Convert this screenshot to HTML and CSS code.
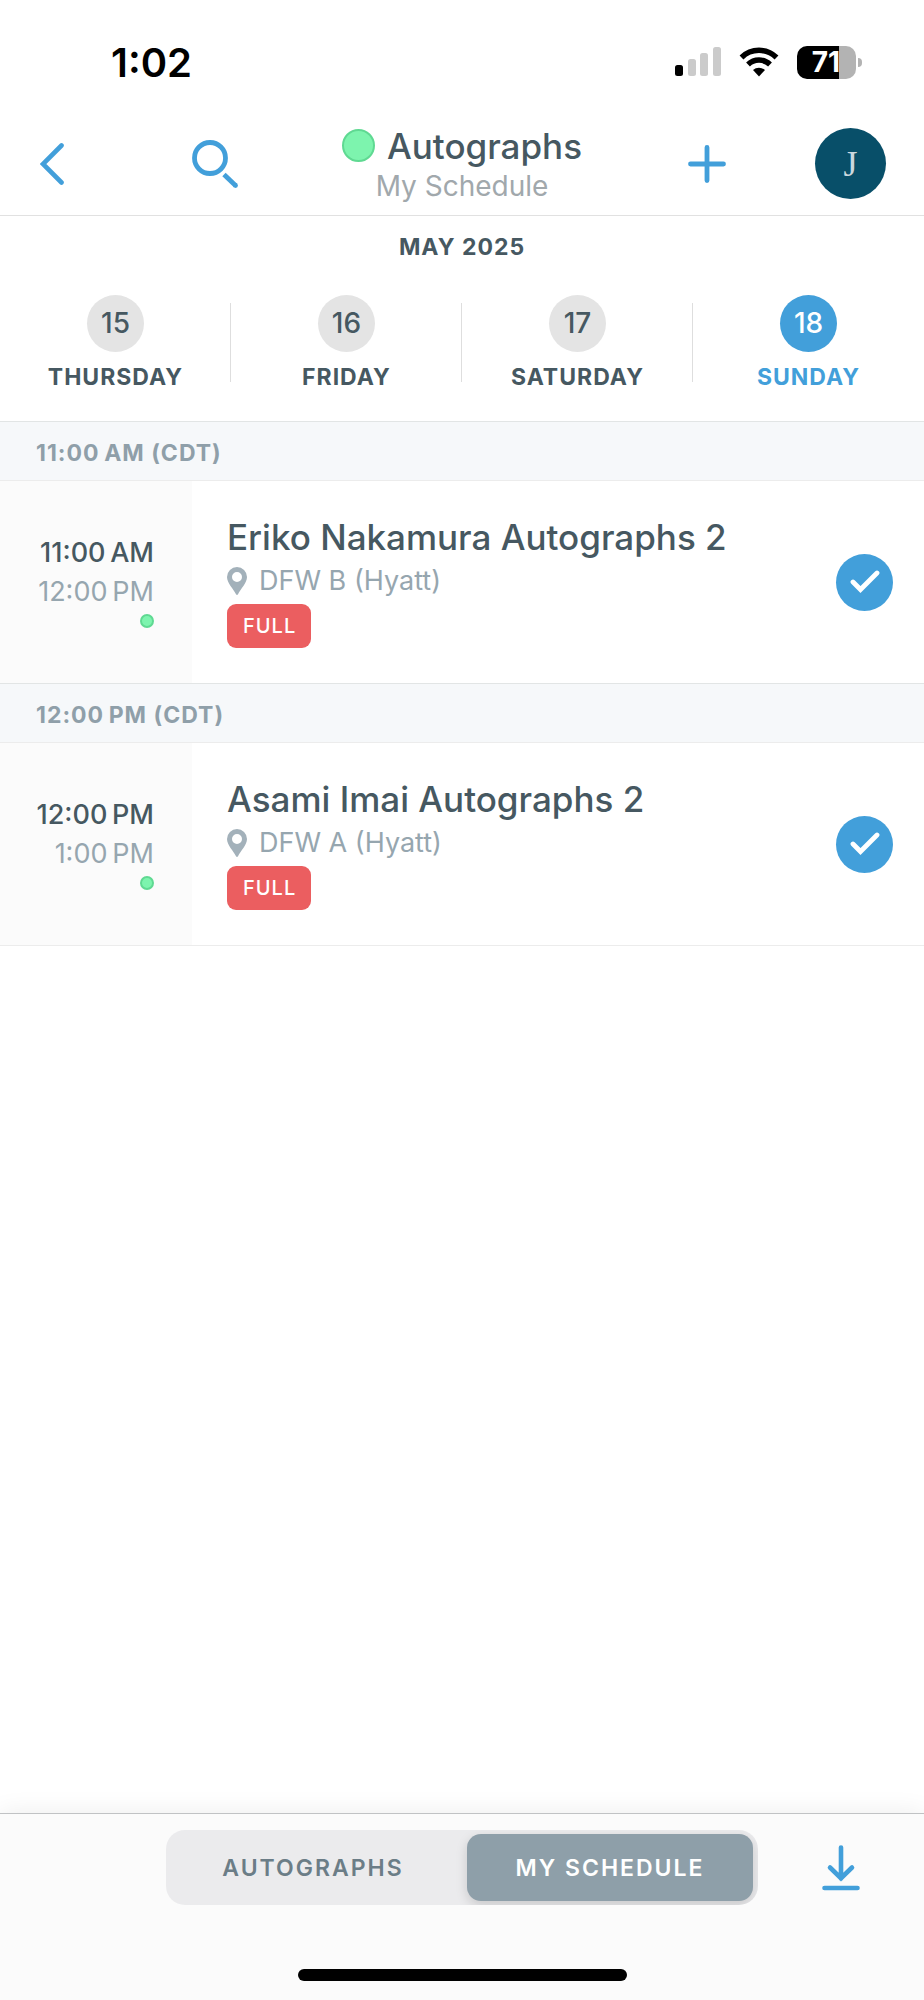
FILE: index.html
```html
<!DOCTYPE html>
<html lang="en">
<head>
<meta charset="UTF-8">
<meta name="viewport" content="width=device-width, initial-scale=1.0">
<title>Autographs - My Schedule</title>
<link rel="stylesheet" href="styles.css">
</head>
<body>

<div class="status-bar">
  <span class="clock">1:02</span>
  <div class="status-icons">
    <svg width="46" height="30" viewBox="0 0 46 30">
      <rect x="0" y="18" width="8" height="11" rx="2.5" fill="#000"/>
      <rect x="13" y="12" width="8" height="17" rx="2.5" fill="#cbcbcb"/>
      <rect x="25" y="6" width="8" height="23" rx="2.5" fill="#cbcbcb"/>
      <rect x="38" y="0" width="8" height="29" rx="2.5" fill="#cbcbcb"/>
    </svg>
    <svg width="40" height="30" viewBox="0 0 40 30">
      <path d="M2.5 10.5a25 25 0 0 1 35 0" fill="none" stroke="#000" stroke-width="5.5"/>
      <path d="M9 17.5a16 16 0 0 1 22 0" fill="none" stroke="#000" stroke-width="5.5"/>
      <path d="M20 29.5l-6-6.500a9 9 0 0 1 12 0z"/>
    </svg>
    <div class="battery"><span class="battery-level">71</span></div>
  </div>
</div>

<header class="header">
  <button class="icon-btn" aria-label="Back">
    <svg width="24" height="42" viewBox="0 0 24 42"><path d="M21.500 2.500L3 21l18.500 18.500" fill="none" stroke="#429fda" stroke-width="4.600" stroke-linecap="round"/></svg>
  </button>
  <button class="icon-btn" aria-label="Search">
    <svg width="46" height="48" viewBox="0 0 46 48"><circle cx="18" cy="18" r="15.500" fill="none" stroke="#429fda" stroke-width="4.800"/><path d="M32 34.500L43.500 45.500" stroke="#429fda" stroke-width="4.800"/><circle cx="43.500" cy="45.500" r="2.400" fill="#429fda"/></svg>
  </button>
  <div class="heading">
    <h1 class="title"><span class="title-dot"></span>Autographs</h1>
    <p class="subtitle">My Schedule</p>
  </div>
  <button class="icon-btn" aria-label="Add">
    <svg width="38" height="38" viewBox="0 0 38 38"><path d="M19 2.500v33M2.500 19h33" stroke="#429fda" stroke-width="4.800" stroke-linecap="round"/></svg>
  </button>
  <button class="avatar" aria-label="Profile">J</button>
</header>

<section class="dates">
  <h2 class="month">MAY 2025</h2>
  <div class="days">
    <button class="day"><span class="day-num">15</span><span class="day-name">THURSDAY</span></button>
    <button class="day"><span class="day-num">16</span><span class="day-name">FRIDAY</span></button>
    <button class="day"><span class="day-num">17</span><span class="day-name">SATURDAY</span></button>
    <button class="day active"><span class="day-num">18</span><span class="day-name">SUNDAY</span></button>
  </div>
</section>

<main class="schedule">
  <h3 class="slot">11:00&#8239;AM (CDT)</h3>
  <article class="event">
    <div class="times">
      <span class="start">11:00&#8239;AM</span>
      <span class="end">12:00&#8239;PM</span>
      <span class="dot"></span>
    </div>
    <div class="info">
      <h4 class="name">Eriko Nakamura Autographs 2</h4>
      <p class="place">
        <svg width="20" height="28" viewBox="0 0 20 28"><path fill="#a3b1ba" fill-rule="evenodd" d="M10 0a10 10 0 0 1 10 10c0 6-6.500 12-9 17.300q-1 1.400-2 0C6.500 22 0 16 0 10A10 10 0 0 1 10 0zm0 5a5 5 0 1 0 0 10 5 5 0 0 0 0-10z"/></svg>
        DFW B (Hyatt)
      </p>
      <span class="badge">FULL</span>
    </div>
    <button class="check" aria-label="Remove from schedule">
      <svg width="30" height="24" viewBox="0 0 30 24"><path d="M3 12l7.500 7.500L27 3" fill="none" stroke="#fff" stroke-width="4.800" stroke-linecap="round"/></svg>
    </button>
  </article>

  <h3 class="slot">12:00&#8239;PM (CDT)</h3>
  <article class="event">
    <div class="times">
      <span class="start">12:00&#8239;PM</span>
      <span class="end">1:00&#8239;PM</span>
      <span class="dot"></span>
    </div>
    <div class="info">
      <h4 class="name">Asami Imai Autographs 2</h4>
      <p class="place">
        <svg width="20" height="28" viewBox="0 0 20 28"><path fill="#a3b1ba" fill-rule="evenodd" d="M10 0a10 10 0 0 1 10 10c0 6-6.500 12-9 17.300q-1 1.400-2 0C6.500 22 0 16 0 10A10 10 0 0 1 10 0zm0 5a5 5 0 1 0 0 10 5 5 0 0 0 0-10z"/></svg>
        DFW A (Hyatt)
      </p>
      <span class="badge">FULL</span>
    </div>
    <button class="check" aria-label="Remove from schedule">
      <svg width="30" height="24" viewBox="0 0 30 24"><path d="M3 12l7.500 7.500L27 3" fill="none" stroke="#fff" stroke-width="4.800" stroke-linecap="round"/></svg>
    </button>
  </article>
</main>

<footer class="footer">
  <div class="toolbar">
    <div class="tabs">
      <button class="tab">AUTOGRAPHS</button>
      <button class="tab selected">MY SCHEDULE</button>
    </div>
    <button class="icon-btn" aria-label="Download">
      <svg width="38" height="46" viewBox="0 0 38 46" fill="none" stroke="#429fda" stroke-width="4.600" stroke-linecap="round"><path d="M19 2.500v31M8 22.500l11 10.700 11-10.700M2.500 43h33"/></svg>
    </button>
  </div>
  <div class="home-bar"></div>
</footer>

</body>
</html>
```

FILE: styles.css
```css
* {box-sizing: border-box;}

body {
    margin: 0;
    min-height: 100vh;
    display: flex;
    flex-direction: column;
    background: #fff;
    color: #465861;
    font-family: Inter, "Liberation Sans", sans-serif;
}

h1, h2, h3, h4, p {margin: 0;}

button {
    padding: 0;
    border: 0;
    background: none;
    color: inherit;
    font: inherit;
    cursor: pointer;
}

svg {display: block;}

/* phone status bar */
.status-bar {
    display: flex;
    justify-content: space-between;
    align-items: center;
    height: 112px;
    padding: 12px 68px 0 111px;
    color: #000;
}

.clock {
    font-size: 40px;
    font-weight: 600;
}

.status-icons {
    display: flex;
    align-items: center;
    gap: 18px;
}

.battery {
    position: relative;
    width: 59px;
    height: 33px;
    border-radius: 10px;
    background: linear-gradient(to right, #000 42px, #b3b3b3 42px);
}

.battery::after {
    content: "";
    position: absolute;
    left: 61px;
    top: 12px;
    width: 4px;
    height: 9px;
    border-radius: 0 4px 4px 0;
    background: #b3b3b3;
}

.battery-level {
    display: block;
    width: 43px;
    text-align: right;
    font-size: 28px;
    line-height: 33px;
    font-weight: 700;
    color: #fff;
}

/* header */
.header {
    display: grid;
    grid-template-columns: 104px 222px 1fr 217px 109px;
    align-items: center;
    height: 104px;
    border-bottom: 1px solid #e1e1e1;
}

.icon-btn {
    display: flex;
    align-items: center;
    justify-content: center;
}

.heading {
    padding-top: 2px;
    text-align: center;
    white-space: nowrap;
}

.title {
    display: flex;
    align-items: center;
    justify-content: center;
    gap: 12px;
    font-size: 35px;
    line-height: 42px;
    font-weight: 500;
}

.title-dot {
    width: 33px;
    height: 33px;
    border: 2px solid #5fd992;
    border-radius: 50%;
    background: #7df4ae;
}

.subtitle {
    font-size: 28px;
    line-height: 38px;
    color: #a1a8ac;
}

.avatar {
    width: 71px;
    height: 71px;
    border-radius: 50%;
    background: #084f69;
    color: #cbd8df;
    font-family: "Liberation Serif", serif;
    font-size: 36px;
}

/* date picker */
.dates {
    padding: 15px 0 28px;
    border-bottom: 1px solid #e2e5e5;
}

.month, .day-name {
    font-size: 23px;
    line-height: 32px;
    font-weight: 700;
    letter-spacing: 1px;
}

.month {
    margin-bottom: 32px;
    text-align: center;
}

.days {
    display: grid;
    grid-template-columns: repeat(4, 1fr);
}

.day {
    position: relative;
    display: flex;
    flex-direction: column;
    align-items: center;
    gap: 9px;
}

.day + .day::before {
    content: "";
    position: absolute;
    left: -1px;
    top: 8px;
    bottom: 11px;
    width: 1px;
    background: #dedede;
}

.day-num {
    width: 57px;
    height: 57px;
    border-radius: 50%;
    background: #e4e4e4;
    font-size: 28px;
    line-height: 57px;
    font-weight: 500;
}

.day.active {color: #429fda;}

.day.active .day-num {
    background: #429fda;
    color: #fff;
}

/* schedule list */
.schedule {flex: 1;}

.slot {
    height: 59px;
    padding-left: 36px;
    border-bottom: 1px solid #ececec;
    background: #f6f8fa;
    color: #8f9fa9;
    font-size: 23px;
    line-height: 62px;
    font-weight: 700;
    letter-spacing: 1px;
}

.event {
    display: flex;
    min-height: 203px;
    padding-right: 31px;
    border-bottom: 1px solid #e2e5e5;
}

.event:last-child {border-color: #ececec;}

.times {
    display: flex;
    flex-direction: column;
    justify-content: center;
    align-items: flex-end;
    width: 192px;
    padding: 0 38px 4px 0;
    background: #fbfbfb;
    font-size: 27px;
    line-height: 39px;
}

.start {font-weight: 500;}

.end {color: #96a6af;}

.dot {
    width: 14px;
    height: 14px;
    margin-top: 3px;
    border: 2px solid #5fd992;
    border-radius: 50%;
    background: #7df4ae;
}

.info {
    flex: 1;
    padding: 33px 0 30px 35px;
}

.name {
    font-size: 35px;
    line-height: 46px;
    font-weight: 500;
}

.place {
    display: flex;
    align-items: center;
    gap: 12px;
    margin-top: 2px;
    font-size: 27px;
    line-height: 38px;
    color: #96a6af;
}

.badge {
    display: inline-block;
    margin-top: 4px;
    padding: 0 15px 0 16px;
    border-radius: 9px;
    background: #eb5e60;
    color: #fff;
    font-size: 20px;
    line-height: 44px;
    font-weight: 500;
    letter-spacing: 1px;
}

.check {
    display: flex;
    align-items: center;
    justify-content: center;
    align-self: center;
    width: 57px;
    height: 57px;
    border-radius: 50%;
    background: #429fda;
}

/* bottom toolbar */
.footer {
    padding: 16px 0 19px;
    border-top: 1px solid #c0c2c4;
    background: #fbfbfb;
    box-shadow: 0 0 24px rgba(0, 0, 0, 0.08);
}

.toolbar {
    display: grid;
    grid-template-columns: 1fr minmax(0, 592px) 1fr;
}

.tabs {
    grid-column: 2;
    display: grid;
    grid-template-columns: 1fr 286px;
    column-gap: 12px;
    height: 75px;
    padding: 4px 5px;
    border-radius: 19px;
    background: #ebebed;
    overflow: hidden;
}

.tab {
    border-radius: 14px;
    color: #6b7d87;
    font-size: 23px;
    font-weight: 600;
    letter-spacing: 2px;
}

.tab.selected {
    background: #8e9fa9;
    color: #fff;
    box-shadow: 0 4px 12px rgba(0, 0, 0, 0.15);
}

.home-bar {
    width: 329px;
    height: 12px;
    margin: 64px auto 0;
    border-radius: 6px;
    background: #000;
}
```
